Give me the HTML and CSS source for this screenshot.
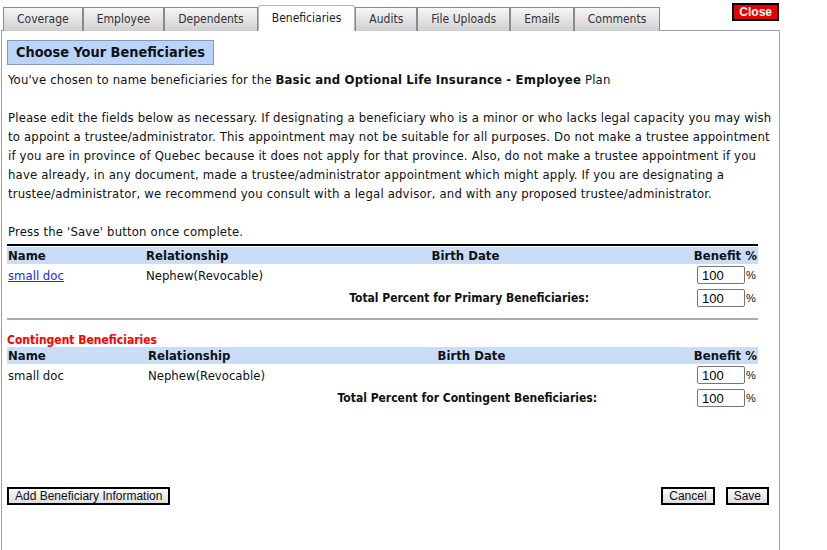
FILE: index.html
```html
<!DOCTYPE html>
<html>
<head>
<meta charset="utf-8">
<link rel="stylesheet" href="styles.css">
</head>
<body>
<div class="page">
  <div class="header">
    <nav class="tabs">
      <span class="tab">Coverage</span>
      <span class="tab">Employee</span>
      <span class="tab">Dependents</span>
      <span class="tab active">Beneficiaries</span>
      <span class="tab">Audits</span>
      <span class="tab">File Uploads</span>
      <span class="tab">Emails</span>
      <span class="tab">Comments</span>
    </nav>
    <button class="close">Close</button>
  </div>
  <div class="panel">
    <h1 class="title">Choose Your Beneficiaries</h1>
    <p class="para">You've chosen to name beneficiaries for the <b>Basic and Optional Life Insurance - Employee</b> Plan</p>
    <p class="para gap">Please edit the fields below as necessary. If designating a beneficiary who is a minor or who lacks legal capacity you may wish to appoint a trustee/administrator. This appointment may not be suitable for all purposes. Do not make a trustee appointment if you are in province of Quebec because it does not apply for that province. Also, do not make a trustee appointment if you have already, in any document, made a trustee/administrator appointment which might apply. If you are designating a trustee/administrator, we recommend you consult with a legal advisor, and with any proposed trustee/administrator.</p>
    <p class="para gap">Press the 'Save' button once complete.</p>

    <div class="grid primary">
      <div class="row head">
        <span>Name</span><span>Relationship</span><span class="c">Birth Date</span><span class="r">Benefit %</span>
      </div>
      <div class="row data">
        <span><a href="#" class="link">small doc</a></span><span>Nephew(Revocable)</span><span></span>
        <span class="r"><input class="pct" value="100"><span class="sign">%</span></span>
      </div>
      <div class="row total">
        <span class="label">Total Percent for Primary Beneficiaries:</span>
        <span class="r"><input class="pct" value="100"><span class="sign">%</span></span>
      </div>
    </div>
    <hr class="rule">

    <div class="sub">Contingent Beneficiaries</div>
    <div class="grid contingent">
      <div class="row head">
        <span>Name</span><span>Relationship</span><span class="c">Birth Date</span><span class="r">Benefit %</span>
      </div>
      <div class="row data">
        <span>small doc</span><span>Nephew(Revocable)</span><span></span>
        <span class="r"><input class="pct" value="100"><span class="sign">%</span></span>
      </div>
      <div class="row total">
        <span class="label">Total Percent for Contingent Beneficiaries:</span>
        <span class="r"><input class="pct" value="100"><span class="sign">%</span></span>
      </div>
    </div>

    <div class="actions">
      <button class="btn">Add Beneficiary Information</button>
      <span class="spacer"></span>
      <button class="btn">Cancel</button>
      <button class="btn">Save</button>
    </div>
  </div>
</div>
</body>
</html>
```
FILE: styles.css
```css
html, body { margin: 0; padding: 0; background: #fff; }
body {
  font-family: "DejaVu Sans Condensed", "DejaVu Sans", sans-serif;
  font-stretch: condensed;
  font-size: 13px;
  color: #111;
}
.page { width: 779px; margin-left: 1px; }
.header { display: flex; align-items: flex-start; height: 30px; position: relative; z-index: 1; }
.tabs { display: flex; align-items: flex-end; padding-left: 2px; height: 31px; }
.tab {
  box-sizing: border-box;
  height: 24px;
  line-height: 22px;
  padding: 0 13px;
  border: 1px solid #8a8a8a;
  border-bottom: none;
  background: linear-gradient(#f6f6f6, #dcdcdc 70%, #cfcfcf);
  color: #333;
  font-size: 12px;
}
.tab.active {
  height: 26px;
  line-height: 25px;
  background: #fff;
  border-color: #b5b5b5;
  border-radius: 3px 3px 0 0;
  color: #222;
}
.close {
  margin-left: auto;
  margin-top: 3px;
  margin-right: 1px;
  height: 18px;
  padding: 0 5px;
  background: #e60000;
  border: 2px solid #000;
  color: #fff;
  font-family: "Liberation Sans", Arial, sans-serif;
  font-weight: bold;
  font-size: 12px;
  line-height: 13px;
}
.panel {
  border: 1px solid #8fa3b3;
  padding: 9px 2px 0 5px;
  height: 540px;
  box-sizing: border-box;
}
.title {
  display: inline-block;
  margin: 0;
  padding: 0 8px;
  height: 23px;
  line-height: 23px;
  background: #b9d3f9;
  border: 1px solid #7f9db9;
  font-size: 14.4px;
  font-weight: bold;
  color: #111;
}
.para { margin: 5px 0 0 1px; line-height: 19px; letter-spacing: 0.17px; }
.para.gap { margin-top: 19px; }
.grid { width: 751px; }
.primary { margin-top: 3px; border-top: 2px solid #000; }
.row { display: grid; align-items: center; }
.primary .row { grid-template-columns: 138px 196px 248px 1fr; }
.contingent .row { grid-template-columns: 140px 198px 252px 1fr; }
.row > span { padding-left: 1px; }
.head { background: #c9ddf9; height: 17px; font-weight: bold; font-size: 13px; margin-top: 1px; }
.head .r { padding-right: 1px; }
.c { text-align: center; }
.r { text-align: right; display: flex; justify-content: flex-end; align-items: center; }
.data { height: 20px; margin-top: 1px; }
.total { height: 24px; padding-top: 2px; box-sizing: border-box; }
.total .label { grid-column: 1 / 4; text-align: right; font-weight: bold; font-size: 12px; }
.total .r { grid-column: 4; }
.link { color: #2b2bd6; text-decoration: underline; }
.pct {
  box-sizing: border-box;
  width: 48px;
  height: 18px;
  border: 1px solid #767676;
  border-radius: 2px;
  padding: 0 0 0 4px;
  font-family: "Liberation Sans", Arial, sans-serif;
  font-size: 13px;
  color: #000;
  margin: 0;
}
.sign { font-family: "Liberation Sans", Arial, sans-serif; font-size: 11px; width: 12px; text-align: left; padding-left: 1px; }
.rule { width: 751px; margin: 9px 0 0 0; border: none; border-top: 2px solid #aaa; height: 0; }
.sub { color: #f00; font-weight: bold; font-size: 12px; margin-top: 14px; line-height: 12px; }
.actions { display: flex; align-items: center; width: 762px; margin-top: 78px; }
.spacer { flex: 1; }
.btn {
  height: 18px;
  padding: 0 6px;
  border: 2px solid #000;
  background: linear-gradient(#fafafa, #dedede);
  font-family: "Liberation Sans", Arial, sans-serif;
  font-size: 12px;
  color: #111;
  line-height: 13px;
}
.btn + .btn { margin-left: 11px; }
```
